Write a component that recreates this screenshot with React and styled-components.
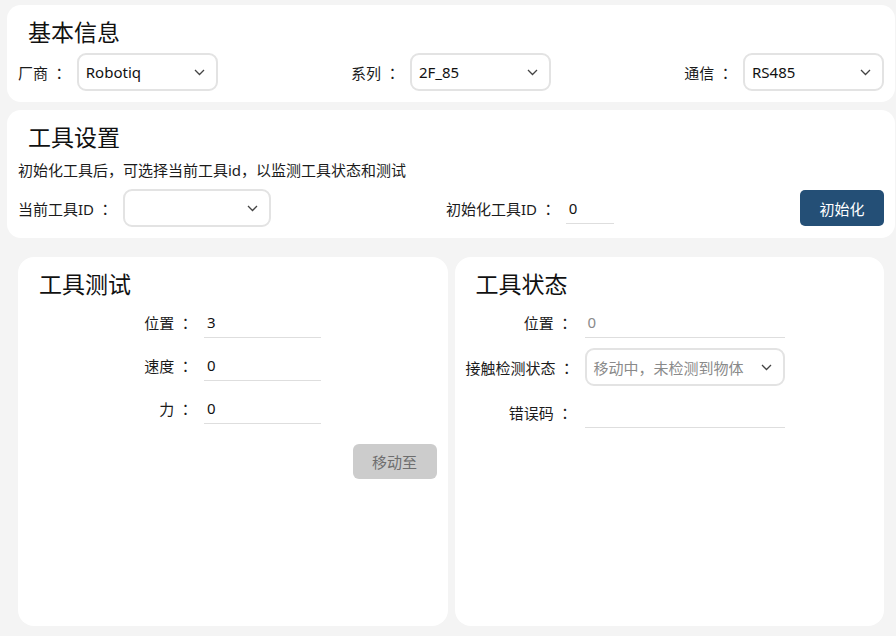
import React from "react";
import styled, { createGlobalStyle } from "styled-components";

const GlobalStyle = createGlobalStyle`
  html, body { margin: 0; padding: 0; background: #f4f4f4; }
  body {
    font-family: "Noto Sans", "Noto Sans CJK SC", sans-serif;
    font-size: 15px;
    color: #1b1b1b;
  }
  * { box-sizing: border-box; }
`;

const Page = styled.div`
  width: 896px;
  height: 636px;
  padding: 5px 1px 10px 7px;
  display: flex;
  flex-direction: column;
  gap: 8px;
`;

const Card = styled.section`
  background: #fff;
  border-radius: 14px;
  padding: 11px 11px 11px 11px;
  display: flex;
  flex-direction: column;
`;

const Title = styled.h2`
  margin: 0 0 0 10px;
  font-size: 23px;
  line-height: 30px;
  font-weight: 400;
  color: #111;
  font-family: "Noto Sans CJK SC", sans-serif;
`;

const SpreadRow = styled.div`
  margin-top: 7px;
  display: flex;
  justify-content: space-between;
  align-items: center;
`;

const Field = styled.div`
  display: flex;
  align-items: center;
  flex: ${(p) => (p.$basis ? `0 0 ${p.$basis}px` : "0 0 auto")};
`;

const Label = styled.span`
  margin-right: 10px;
  white-space: nowrap;
  font-size: 15px;
  color: #1b1b1b;
`;

const Colon = styled.span`
  display: inline-block;
  width: 1em;
  margin-left: 0.25em;
  text-align: center;
  font-family: "Noto Sans CJK JP", "Noto Sans CJK SC", sans-serif;
`;

const SelectBox = styled.div`
  width: ${(p) => p.$w}px;
  height: 38px;
  border: 2px solid #e3e3e3;
  border-radius: 9px;
  display: flex;
  align-items: center;
  justify-content: space-between;
  padding: 0 11px 0 7px;
  font-size: 15px;
  color: ${(p) => (p.$muted ? "#8a8a8a" : "#111")};
  background: #fff;
`;

const UnderInput = styled.div`
  width: ${(p) => p.$w}px;
  height: 32px;
  border-bottom: 1px solid #dedede;
  display: flex;
  align-items: center;
  padding-left: 3px;
  font-size: 15px;
  color: ${(p) => (p.$muted ? "#8a8a8a" : "#111")};
`;

const Desc = styled.p`
  margin: 9px 0 0 0;
  font-size: 15px;
  line-height: 20px;
  color: #1b1b1b;
`;

const ToolRow = styled.div`
  margin-top: 9px;
  display: flex;
  align-items: center;
`;

const RightGroup = styled.div`
  flex: 1;
  display: flex;
  align-items: center;
  justify-content: space-between;
`;

const PrimaryButton = styled.button`
  width: 84px;
  height: 36px;
  border: none;
  border-radius: 5px;
  background: #244f76;
  color: #fff;
  font-family: inherit;
  font-size: 15px;
  padding: 0;
`;

const BottomRow = styled.div`
  flex: 1;
  margin-top: 11px;
  padding: 0 11px;
  display: flex;
  gap: 7px;
`;

const Panel = styled(Card)`
  flex: 1;
  border-radius: 16px;
`;

const FormGrid = styled.div`
  margin-top: 8px;
  margin-left: ${(p) => p.$offset}px;
  display: grid;
  grid-template-columns: ${(p) => p.$labelW}px ${(p) => p.$inputW}px;
  column-gap: ${(p) => p.$colGap}px;
  row-gap: ${(p) => p.$rowGap}px;
  align-items: center;
`;

const FormLabel = styled.span`
  text-align: right;
  white-space: nowrap;
  font-size: 15px;
  color: #1b1b1b;
`;

const MuteButton = styled.button`
  align-self: flex-end;
  margin-top: 20px;
  width: 84px;
  height: 35px;
  border: none;
  border-radius: 6px;
  background: #cccccc;
  color: #6e6e6e;
  font-family: inherit;
  font-size: 15px;
  padding: 0;
`;

const Chevron = () => (
  <svg width="11" height="7" viewBox="0 0 11 7" fill="none">
    <polyline points="1,1 5.5,5.5 10,1" stroke="#444" strokeWidth="1.3" fill="none" />
  </svg>
);

const Select = ({ w, value, muted }) => (
  <SelectBox $w={w} $muted={muted}>
    <span>{value}</span>
    <Chevron />
  </SelectBox>
);

const L = ({ children }) => (
  <>
    {children}
    <Colon>：</Colon>
  </>
);

export default function App() {
  return (
    <>
      <GlobalStyle />
      <Page>
        <Card>
          <Title>基本信息</Title>
          <SpreadRow>
            <Field>
              <Label><L>厂商</L></Label>
              <Select w={141} value="Robotiq" />
            </Field>
            <Field>
              <Label><L>系列</L></Label>
              <Select w={141} value="2F_85" />
            </Field>
            <Field>
              <Label><L>通信</L></Label>
              <Select w={141} value="RS485" />
            </Field>
          </SpreadRow>
        </Card>

        <Card>
          <Title>工具设置</Title>
          <Desc>初始化工具后，可选择当前工具id，以监测工具状态和测试</Desc>
          <ToolRow>
            <Field $basis={428}>
              <Label><L>当前工具ID</L></Label>
              <Select w={148} value="" />
            </Field>
            <RightGroup>
              <Field>
                <Label><L>初始化工具ID</L></Label>
                <UnderInput $w={48}>0</UnderInput>
              </Field>
              <PrimaryButton>初始化</PrimaryButton>
            </RightGroup>
          </ToolRow>
        </Card>

        <BottomRow>
          <Panel>
            <Title>工具测试</Title>
            <FormGrid $offset={74} $labelW={90} $inputW={117} $colGap={11} $rowGap={11}>
              <FormLabel><L>位置</L></FormLabel>
              <UnderInput $w={117}>3</UnderInput>
              <FormLabel><L>速度</L></FormLabel>
              <UnderInput $w={117}>0</UnderInput>
              <FormLabel><L>力</L></FormLabel>
              <UnderInput $w={117}>0</UnderInput>
            </FormGrid>
            <MuteButton>移动至</MuteButton>
          </Panel>
          <Panel>
            <Title>工具状态</Title>
            <FormGrid $offset={0} $labelW={107} $inputW={200} $colGap={12} $rowGap={10}>
              <FormLabel><L>位置</L></FormLabel>
              <UnderInput $w={200} $muted>0</UnderInput>
              <FormLabel><L>接触检测状态</L></FormLabel>
              <Select w={200} value="移动中，未检测到物体" muted />
              <FormLabel><L>错误码</L></FormLabel>
              <UnderInput $w={200}></UnderInput>
            </FormGrid>
          </Panel>
        </BottomRow>
      </Page>
    </>
  );
}
